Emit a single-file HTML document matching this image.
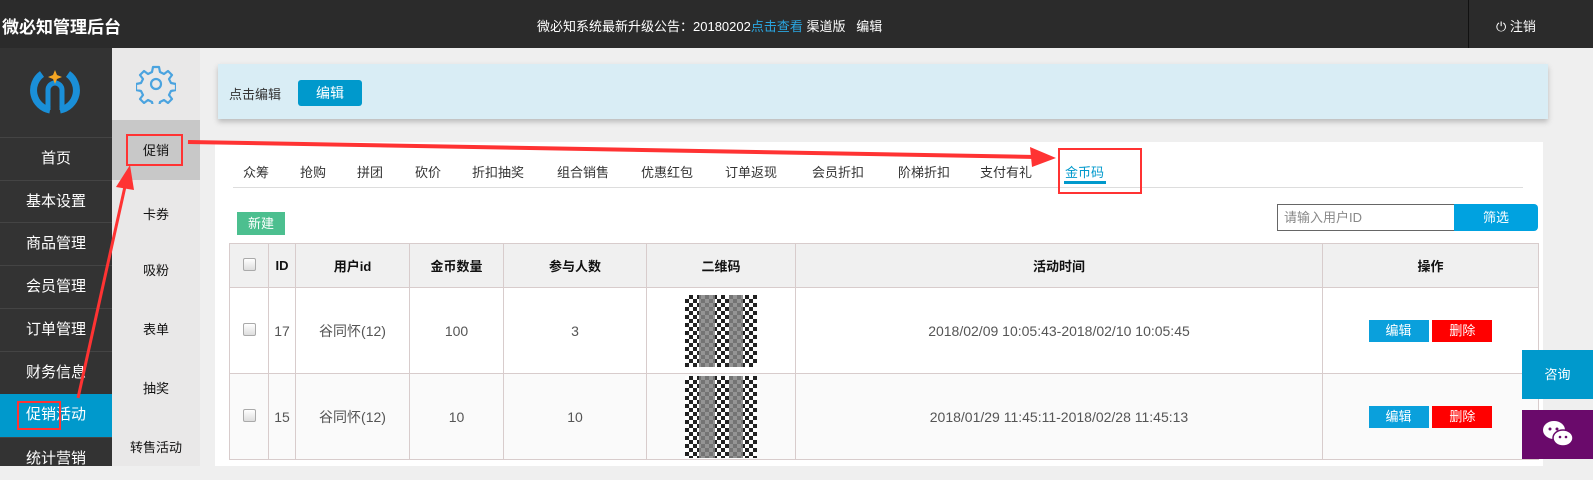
<!DOCTYPE html>
<html><head><meta charset="utf-8"><style>
*{margin:0;padding:0;box-sizing:border-box}
body{width:1593px;height:466px;overflow:hidden;position:relative;background:#efefef;font-family:"Liberation Sans","Noto Sans CJK SC",sans-serif;font-size:13px;color:#333}
.a{position:absolute}
#hd{left:0;top:0;width:1593px;height:48px;background:#2b2b2b;color:#fff}
#sb{left:0;top:48px;width:112px;height:418px;background:#333}
.mi{position:absolute;left:0;width:112px;height:43px;border-top:1px solid #444;color:#fff;font-size:15px;text-align:center;line-height:42px}
#sb2{left:112px;top:48px;width:88px;height:418px;background:#e9e8e8}
.si{position:absolute;left:0;width:88px;text-align:center;font-size:13px;color:#111}
th{background:#f0f0f0;font-weight:bold;color:#111;font-size:13px}
td,th{border:1px solid #d8cccc;text-align:center}
td{color:#555;font-size:14px}
.cb{display:inline-block;width:13px;height:13px;border:1px solid #aaa;border-radius:2px;background:linear-gradient(#fff,#ddd)}
.bt{display:inline-block;width:60px;height:22px;line-height:22px;color:#fff;font-size:13px}
.tb{position:absolute;top:162px;font-size:13px;color:#333}
.qr{margin:auto;width:72px;background:
linear-gradient(90deg,transparent 14px,rgba(130,130,130,.85) 14px 30px,transparent 30px 44px,rgba(130,130,130,.85) 44px 58px,transparent 58px),
repeating-conic-gradient(#222 0 25%,#fff 0 50%) 0 0/8px 8px}
</style></head><body>
<div id="hd" class="a">
 <div class="a" style="left:2px;top:13px;font-size:17px;font-weight:bold">微必知管理后台</div>
 <div class="a" style="left:537px;top:16px;font-size:13px">微必知系统最新升级公告：20180202<span style="color:#2aa6e0">点击查看</span> 渠道版&nbsp;&nbsp;&nbsp;编辑</div>
 <div class="a" style="left:1468px;top:0;width:1px;height:48px;background:#111"></div>
 <div class="a" style="left:1496px;top:16px;font-size:13px">⏻ 注销</div>
</div>
<div id="sb" class="a">
 <svg class="a" style="left:30px;top:18px" width="50" height="50" viewBox="0 0 50 50"><path d="M12 8 A20 20 0 0 0 20 44" fill="none" stroke="#1a8fd8" stroke-width="7"/><path d="M38 8 A20 20 0 0 1 30 44" fill="none" stroke="#1a8fd8" stroke-width="7"/><path d="M18 44 V24 a7 7 0 0 1 14 0 V44" fill="none" stroke="#1a8fd8" stroke-width="5"/><path d="M25 4 l2 5 5 2 -5 2 -2 5 -2 -5 -5 -2 5 -2z" fill="#f5a623"/></svg>
 <div class="mi" style="top:89px">首页</div>
 <div class="mi" style="top:132px">基本设置</div>
 <div class="mi" style="top:174px">商品管理</div>
 <div class="mi" style="top:217px">会员管理</div>
 <div class="mi" style="top:260px">订单管理</div>
 <div class="mi" style="top:303px">财务信息</div>
 <div class="mi" style="top:346px;background:#0099cc;border-top:0">促销活动</div>
 <div class="mi" style="top:389px">统计营销</div>
</div>
<div id="sb2" class="a">
 <svg class="a" style="left:24px;top:16px" width="40" height="40" viewBox="0 0 40 40"><path d="M17 3h6l1 5 4 2 4-3 4 4-3 4 2 4 5 1v6l-5 1-2 4 3 4-4 4-4-3-4 2-1 5h-6l-1-5-4-2-4 3-4-4 3-4-2-4-5-1v-6l5-1 2-4-3-4 4-4 4 3 4-2z" fill="none" stroke="#4aa3df" stroke-width="2.2" stroke-linejoin="round"/><circle cx="20" cy="20" r="5" fill="none" stroke="#4aa3df" stroke-width="2.2"/></svg>
 <div class="a" style="left:0;top:72px;width:88px;height:60px;background:#c8c8c8"></div>
 <div class="si" style="top:92px">促销</div>
 <div class="si" style="top:156px">卡券</div>
 <div class="si" style="top:212px">吸粉</div>
 <div class="si" style="top:271px">表单</div>
 <div class="si" style="top:330px">抽奖</div>
 <div class="si" style="top:389px">转售活动</div>
</div>
<div class="a" style="left:218px;top:64px;width:1330px;height:55px;background:#d9edf5;box-shadow:0 3px 5px #bbb"></div>
<div class="a" style="left:229px;top:84px">点击编辑</div>
<div class="a" style="left:298px;top:80px;width:64px;height:26px;background:#0099cc;border-radius:3px;color:#fff;text-align:center;line-height:26px;font-size:14px">编辑</div>
<div class="a" style="left:215px;top:142px;width:1328px;height:324px;background:#fff"></div>
<div class="a" style="left:233px;top:187px;width:1290px;height:1px;background:#ddd"></div>
<span class="tb" style="left:243px">众筹</span><span class="tb" style="left:300px">抢购</span><span class="tb" style="left:357px">拼团</span><span class="tb" style="left:415px">砍价</span><span class="tb" style="left:472px">折扣抽奖</span><span class="tb" style="left:557px">组合销售</span><span class="tb" style="left:641px">优惠红包</span><span class="tb" style="left:725px">订单返现</span><span class="tb" style="left:812px">会员折扣</span><span class="tb" style="left:898px">阶梯折扣</span><span class="tb" style="left:980px">支付有礼</span><span class="tb" style="left:1065px;color:#0099cc">金币码</span>
<div class="a" style="left:1064px;top:181px;width:42px;height:3px;background:#0099cc"></div>
<div class="a" style="left:237px;top:212px;width:48px;height:23px;background:#4cbf8f;color:#fff;text-align:center;line-height:23px">新建</div>
<div class="a" style="left:1277px;top:204px;width:178px;height:27px;border:1px solid #666;padding-left:6px;line-height:25px;color:#888">请输入用户ID</div>
<div class="a" style="left:1454px;top:204px;width:84px;height:27px;background:#00a2e0;border-radius:0 4px 4px 0;color:#fff;text-align:center;line-height:27px">筛选</div>
<table class="a" style="left:229px;top:243px;width:1310px;border-collapse:collapse">
<tr style="height:44px"><th style="width:39px"><span class="cb"></span></th><th style="width:27px">ID</th><th style="width:114px">用户id</th><th style="width:94px">金币数量</th><th style="width:143px">参与人数</th><th style="width:149px">二维码</th><th style="width:527px">活动时间</th><th>操作</th></tr>
<tr style="height:86px"><td><span class="cb"></span></td><td>17</td><td>谷同怀(12)</td><td>100</td><td>3</td><td><div class="qr" style="height:72px"></div></td><td>2018/02/09 10:05:43-2018/02/10 10:05:45</td><td><span class="bt" style="background:#0aa0dc">编辑</span> <span class="bt" style="background:#f00">删除</span></td></tr>
<tr style="height:86px;background:#fafafa"><td><span class="cb"></span></td><td>15</td><td>谷同怀(12)</td><td>10</td><td>10</td><td><div class="qr" style="height:82px"></div></td><td>2018/01/29 11:45:11-2018/02/28 11:45:13</td><td><span class="bt" style="background:#0aa0dc">编辑</span> <span class="bt" style="background:#f00">删除</span></td></tr>
</table>
<div class="a" style="left:1522px;top:350px;width:71px;height:49px;background:#0099cc;color:#fff;text-align:center;line-height:49px;font-size:13px">咨询</div>
<div class="a" style="left:1522px;top:410px;width:71px;height:49px;background:#6a0a6b"><svg style="margin:10px 0 0 20px" width="32" height="28" viewBox="0 0 32 28"><ellipse cx="12" cy="10" rx="11" ry="9" fill="#fff"/><ellipse cx="21" cy="18" rx="10" ry="8" fill="#fff" stroke="#6a0a6b" stroke-width="1.5"/><circle cx="8" cy="9" r="1.5" fill="#6a0a6b"/><circle cx="15" cy="9" r="1.5" fill="#6a0a6b"/><circle cx="18" cy="17" r="1.3" fill="#6a0a6b"/><circle cx="24" cy="17" r="1.3" fill="#6a0a6b"/></svg></div>
<svg class="a" style="left:0;top:0" width="1593" height="466">
<g fill="none" stroke="#f33" stroke-width="2"><rect x="127" y="135" width="55" height="30"/><rect x="1059" y="149" width="82" height="44"/><rect x="18" y="402" width="42" height="27"/></g>
<path d="M188 142 L1035 157" stroke="#f33" stroke-width="4"/><path d="M1056 158 L1030 147 L1032 167z" fill="#f33"/>
<path d="M78 398 L126 182" stroke="#f33" stroke-width="3"/><path d="M130 165 L116 187 L134 190z" fill="#f33"/>
</svg>
</body></html>
